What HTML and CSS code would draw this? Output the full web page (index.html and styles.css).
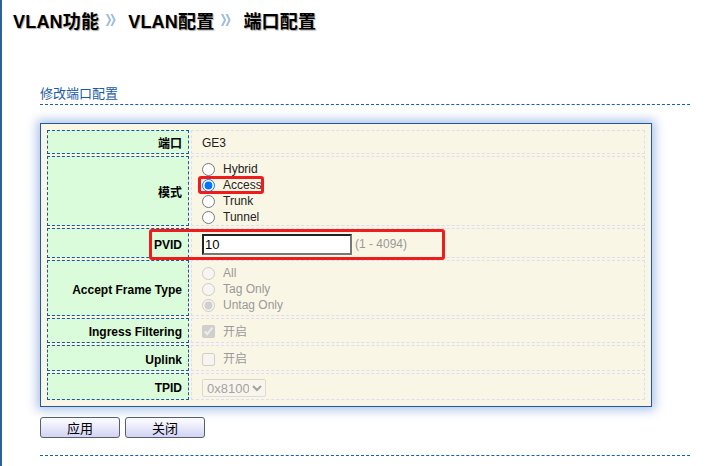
FILE: index.html
```html
<!DOCTYPE html>
<html lang="zh-CN">
<head>
  <meta charset="UTF-8">
  <meta name="viewport" content="width=device-width, initial-scale=1.0">
  <title>端口配置</title>
  <link rel="stylesheet" href="styles.css">
</head>
<body>
  <div class="page">
    <h1 class="crumbs">
      <span>VLAN功能</span>
      <svg class="sep" viewBox="0 0 10 12"><path d="M0 0h2.2l3 6-3 6H0l3-6z M4.5 0h2.2l3 6-3 6H4.5l3-6z"/></svg>
      <span>VLAN配置</span>
      <svg class="sep" viewBox="0 0 10 12"><path d="M0 0h2.2l3 6-3 6H0l3-6z M4.5 0h2.2l3 6-3 6H4.5l3-6z"/></svg>
      <span>端口配置</span>
    </h1>

    <div class="content">
      <div class="section-title">修改端口配置</div>

      <div class="panel">
        <table class="form-table">
          <tr class="r-port">
            <td class="label">端口</td>
            <td class="value">GE3</td>
          </tr>
          <tr class="r-mode">
            <td class="label">模式</td>
            <td class="value list">
              <label class="opt"><input type="radio" name="mode">Hybrid</label>
              <label class="opt"><input type="radio" name="mode" checked>Access</label>
              <label class="opt"><input type="radio" name="mode">Trunk</label>
              <label class="opt"><input type="radio" name="mode">Tunnel</label>
            </td>
          </tr>
          <tr class="r-pvid">
            <td class="label">PVID</td>
            <td class="value">
              <input class="pvid" type="text" value="10"><span class="range">(1 - 4094)</span>
            </td>
          </tr>
          <tr class="r-aft">
            <td class="label">Accept Frame Type</td>
            <td class="value list">
              <label class="opt off"><input type="radio" name="aft" disabled>All</label>
              <label class="opt off"><input type="radio" name="aft" disabled>Tag Only</label>
              <label class="opt off"><input type="radio" name="aft" checked disabled>Untag Only</label>
            </td>
          </tr>
          <tr class="r-ingress">
            <td class="label">Ingress Filtering</td>
            <td class="value">
              <label class="opt off"><input type="checkbox" checked disabled>开启</label>
            </td>
          </tr>
          <tr class="r-uplink">
            <td class="label">Uplink</td>
            <td class="value">
              <label class="opt off"><input type="checkbox" disabled>开启</label>
            </td>
          </tr>
          <tr class="r-tpid">
            <td class="label">TPID</td>
            <td class="value">
              <select class="tpid" disabled><option>0x8100</option></select>
            </td>
          </tr>
        </table>

        <div class="mark mark-access"></div>
        <div class="mark mark-pvid"></div>
      </div>

      <div class="actions">
        <button class="btn" type="button">应用</button>
        <button class="btn" type="button">关闭</button>
      </div>

      <div class="bottom-line"></div>
    </div>
  </div>
</body>
</html>
```

FILE: styles.css
```css
* {
  box-sizing: border-box;
}

body {
  margin: 0;
  background-color: #fff;
  color: #000;
  font-family: "Liberation Sans", "Noto Sans CJK SC", sans-serif;
  font-size: 12px;
}

.page {
  border-left: 2px solid #2f6398;
  min-height: 100vh;
}

.crumbs {
  margin: 0;
  height: 40px;
  padding-left: 11px;
  display: flex;
  align-items: center;
  font-size: 18px;
  font-weight: bold;
  letter-spacing: 0.2px;
  text-shadow: 1px 1px 1px #a8a8a8;
}

.crumbs .sep {
  width: 10px;
  height: 12px;
  margin: 0 12px 0 7px;
  fill: #9dbde6;
}

.content {
  margin-left: 38px;
  width: 650px;
}

.section-title {
  margin-top: 44px;
  height: 21px;
  line-height: 20px;
  color: #1a5aa5;
  font-size: 13px;
  border-bottom: 1px dashed #1560b0;
}

.panel {
  position: relative;
  margin-top: 18px;
  width: 612px;
  padding: 4px;
  border: 1px solid #1d5aa3;
  background-color: #faf6e6;
  box-shadow: 0 0 10px 3px rgba(60, 110, 200, 0.42);
}

.form-table {
  width: 100%;
  border-spacing: 2px;
}

.form-table td {
  padding: 2px 0 0;
  line-height: 16px;
  vertical-align: middle;
}

.form-table .label {
  width: 142px;
  padding-right: 6px;
  padding-top: 3px;
  background-color: #dafcda;
  border: 1px dashed #1a55a0;
  text-align: right;
  font-weight: bold;
}

.form-table .value {
  padding-left: 10px;
  border: 1px dashed #dcdcf3;
  color: #222;
}

.form-table .value.list {
  vertical-align: top;
  padding-top: 4px;
}

.r-port td { height: 24px; }
.r-mode td { height: 70px; }
.r-pvid td { height: 30px; }
.r-aft td { height: 56px; }
.r-ingress td { height: 25px; }
.r-uplink td { height: 26px; }
.r-tpid td { height: 27px; }

.opt {
  display: flex;
  align-items: center;
  height: 16px;
}

.opt input {
  width: 13px;
  height: 13px;
  margin: 0 8px 0 0;
}

.opt.off {
  color: #999;
}

.pvid {
  width: 150px;
  height: 21px;
  padding: 0 1px;
  border: 2px solid;
  border-color: #222 #777 #777 #222;
  font-family: "Liberation Sans", sans-serif;
  font-size: 13px;
  vertical-align: middle;
}

.range {
  margin-left: 3px;
  color: #999;
  vertical-align: middle;
}

.tpid {
  width: 64px;
  height: 18px;
  font-family: "Liberation Sans", sans-serif;
  font-size: 13px;
  vertical-align: middle;
}

.mark {
  position: absolute;
  border: 3px solid #f01c1c;
  border-radius: 3px;
}

.mark-access {
  left: 157px;
  top: 52px;
  width: 66px;
  height: 18px;
}

.mark-pvid {
  left: 108px;
  top: 105px;
  width: 296px;
  height: 31px;
}

.actions {
  margin-top: 10px;
  display: flex;
  gap: 5px;
}

.btn {
  width: 80px;
  height: 21px;
  padding: 0;
  border: 1px solid #56606c;
  border-radius: 3px;
  background: linear-gradient(#ffffff, #d2d2f5);
  font-family: "Noto Sans CJK SC", sans-serif;
  font-size: 13px;
  line-height: 19px;
  color: #000;
  cursor: pointer;
}

.bottom-line {
  margin-top: 17px;
  border-top: 1px dashed #1560b0;
}
```
